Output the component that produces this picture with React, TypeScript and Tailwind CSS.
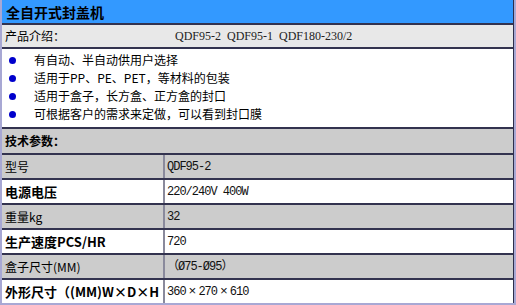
import React from "react";

const cjk = "font-['Noto_Sans_CJK_SC',sans-serif]";

const features = [
  "有自动、半自动供用户选择",
  "适用于PP、PE、PET，等材料的包装",
  "适用于盒子，长方盒、正方盒的封口",
  "可根据客户的需求来定做，可以看到封口膜",
];

const specs = [
  { label: "型号", value: ["QDF95-2"], gray: true, bold: false },
  { label: "电源电压", value: ["220/240V 400W"], gray: false, bold: true },
  { label: "重量kg", value: ["32"], gray: true, bold: false },
  { label: "生产速度PCS/HR", value: ["720"], gray: false, bold: true },
  { label: "盒子尺寸(MM)", value: ["（Ø75-Ø95）"], gray: true, bold: false },
  { label: "外形尺寸（(MM)W×D×H", value: ["360", "270", "610"], gray: false, bold: true },
];

export default function App() {
  return (
    <div className="w-[516px] h-[305px] overflow-hidden bg-white">
      <div className={`w-[516px] border-l-2 border-r-2 border-b-2 border-[#a8a8d4] ${cjk} text-black`}>
        <div className="border-r border-[#2e2e4a]">
          {/* Title */}
          <div className="h-[23px] bg-[#3399ff] flex items-center pl-[4px] text-[14px] font-bold leading-none">
            全自开式封盖机
          </div>

          {/* Intro */}
          <div className="h-[24px] border-t-2 border-[#33334f] bg-[#e8e8e8] flex items-center pl-[3px] text-[12px] leading-none">
            <span className="w-[170px] shrink-0">产品介绍：</span>
            <span className="font-['Liberation_Serif',serif] text-[12px] whitespace-pre text-[#222]">
              QDF95-2  QDF95-1  QDF180-230/2
            </span>
          </div>

          {/* Features */}
          <ul className="border-t-2 border-[#33334f] pt-[2px] pb-[4px] bg-white">
            {features.map((f) => (
              <li key={f} className="flex items-center h-[18px] text-[12px] leading-none">
                <span className="ml-[7px] w-[7px] h-[7px] rounded-full bg-[#0000cc] shrink-0" />
                <span className="ml-[18px]">{f}</span>
              </li>
            ))}
          </ul>

          {/* Spec header */}
          <div className="h-[26px] border-t-2 border-[#33334f] bg-[#cccccc] flex items-center pl-[3px] text-[12px] font-bold leading-none">
            技术参数：
          </div>

          {/* Spec rows */}
          {specs.map((r) => (
            <div
              key={r.label}
              className={`h-[25px] border-t-2 border-[#33334f] flex ${r.gray ? "bg-[#cccccc]" : "bg-white"}`}
            >
              <div
                className={`w-[163px] shrink-0 border-r-2 border-[#8a8a9c] flex items-center pl-[3px] leading-none whitespace-nowrap ${
                  r.bold ? "text-[13px] font-bold" : "text-[12px]"
                }`}
              >
                {r.label}
              </div>
              <div className="flex items-center pl-[2px] font-['Liberation_Mono','Noto_Sans_CJK_SC',monospace] text-[12px] tracking-[-1px] leading-none text-[#111]">
                {r.value.map((v, i) => (
                  <React.Fragment key={i}>
                    {i > 0 && <span className="px-[3px] text-[13px]">×</span>}
                    {v}
                  </React.Fragment>
                ))}
              </div>
            </div>
          ))}
        </div>
      </div>
    </div>
  );
}
